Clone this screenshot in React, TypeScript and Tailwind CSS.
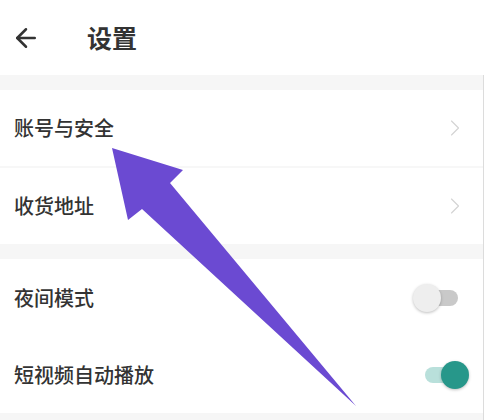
import { ArrowLeft, ChevronRight } from "lucide-react";

const font = { fontFamily: '"Noto Sans CJK SC", "Noto Sans", sans-serif' };

function LinkRow({ label }: { label: string }) {
    return (
        <div className="flex h-[76px] items-center justify-between bg-white pl-[14px] pr-[14px]">
            <span className="text-[20px] font-medium text-[#333]">{label}</span>
            <ChevronRight className="h-[28px] w-[28px] text-[#d4d4d4]" strokeWidth={1} />
        </div>
    );
}

function Toggle({ on }: { on: boolean }) {
    return (
        <div className="relative h-[28px] w-[56px]">
            <div className={`absolute left-[12px] top-[6px] h-[16px] w-[33px] rounded-full ${on ? "bg-[#b9e0db]" : "bg-[#c9c9c9]"}`} />
            <div
                className={`absolute top-0 h-[28px] w-[28px] rounded-full shadow-[0_1px_3px_rgba(0,0,0,0.25)] ${on ? "left-[28px] bg-[#27978a]" : "left-0 bg-[#eeeeee]"}`}
            />
        </div>
    );
}

function ToggleRow({ label, on }: { label: string; on: boolean }) {
    return (
        <div className="flex h-[77px] items-center justify-between bg-white pl-[14px] pr-[14px]">
            <span className="text-[20px] font-medium text-[#333]">{label}</span>
            <Toggle on={on} />
        </div>
    );
}

export default function App() {
    return (
        <div className="relative h-[420px] w-[484px] overflow-hidden bg-white" style={font}>
            <div className="flex h-[75px] items-center bg-white pl-[11px]">
                <ArrowLeft className="h-[30px] w-[30px] text-[#333]" strokeWidth={2} />
                <h1 className="ml-[46px] text-[25px] font-bold text-[#333]">设置</h1>
            </div>

            <div className="border-r border-[#dcdcdc]">
                <div className="h-[15px] bg-[#f6f6f6]" />
                <LinkRow label="账号与安全" />
                <div className="h-[2px] bg-[#f7f7f7]" />
                <LinkRow label="收货地址" />
                <div className="h-[15px] bg-[#f6f6f6]" />
                <ToggleRow label="夜间模式" on={false} />
                <ToggleRow label="短视频自动播放" on={true} />
                <div className="h-[20px] bg-[#f6f6f6]" />
            </div>

            <svg className="pointer-events-none absolute inset-0" width="484" height="420" viewBox="0 0 484 420">
                <polygon
                    points="112,148 183,170 170,183 356,406 142,209 128,220"
                    fill="#6b4ad2"
                />
            </svg>
        </div>
    );
}
